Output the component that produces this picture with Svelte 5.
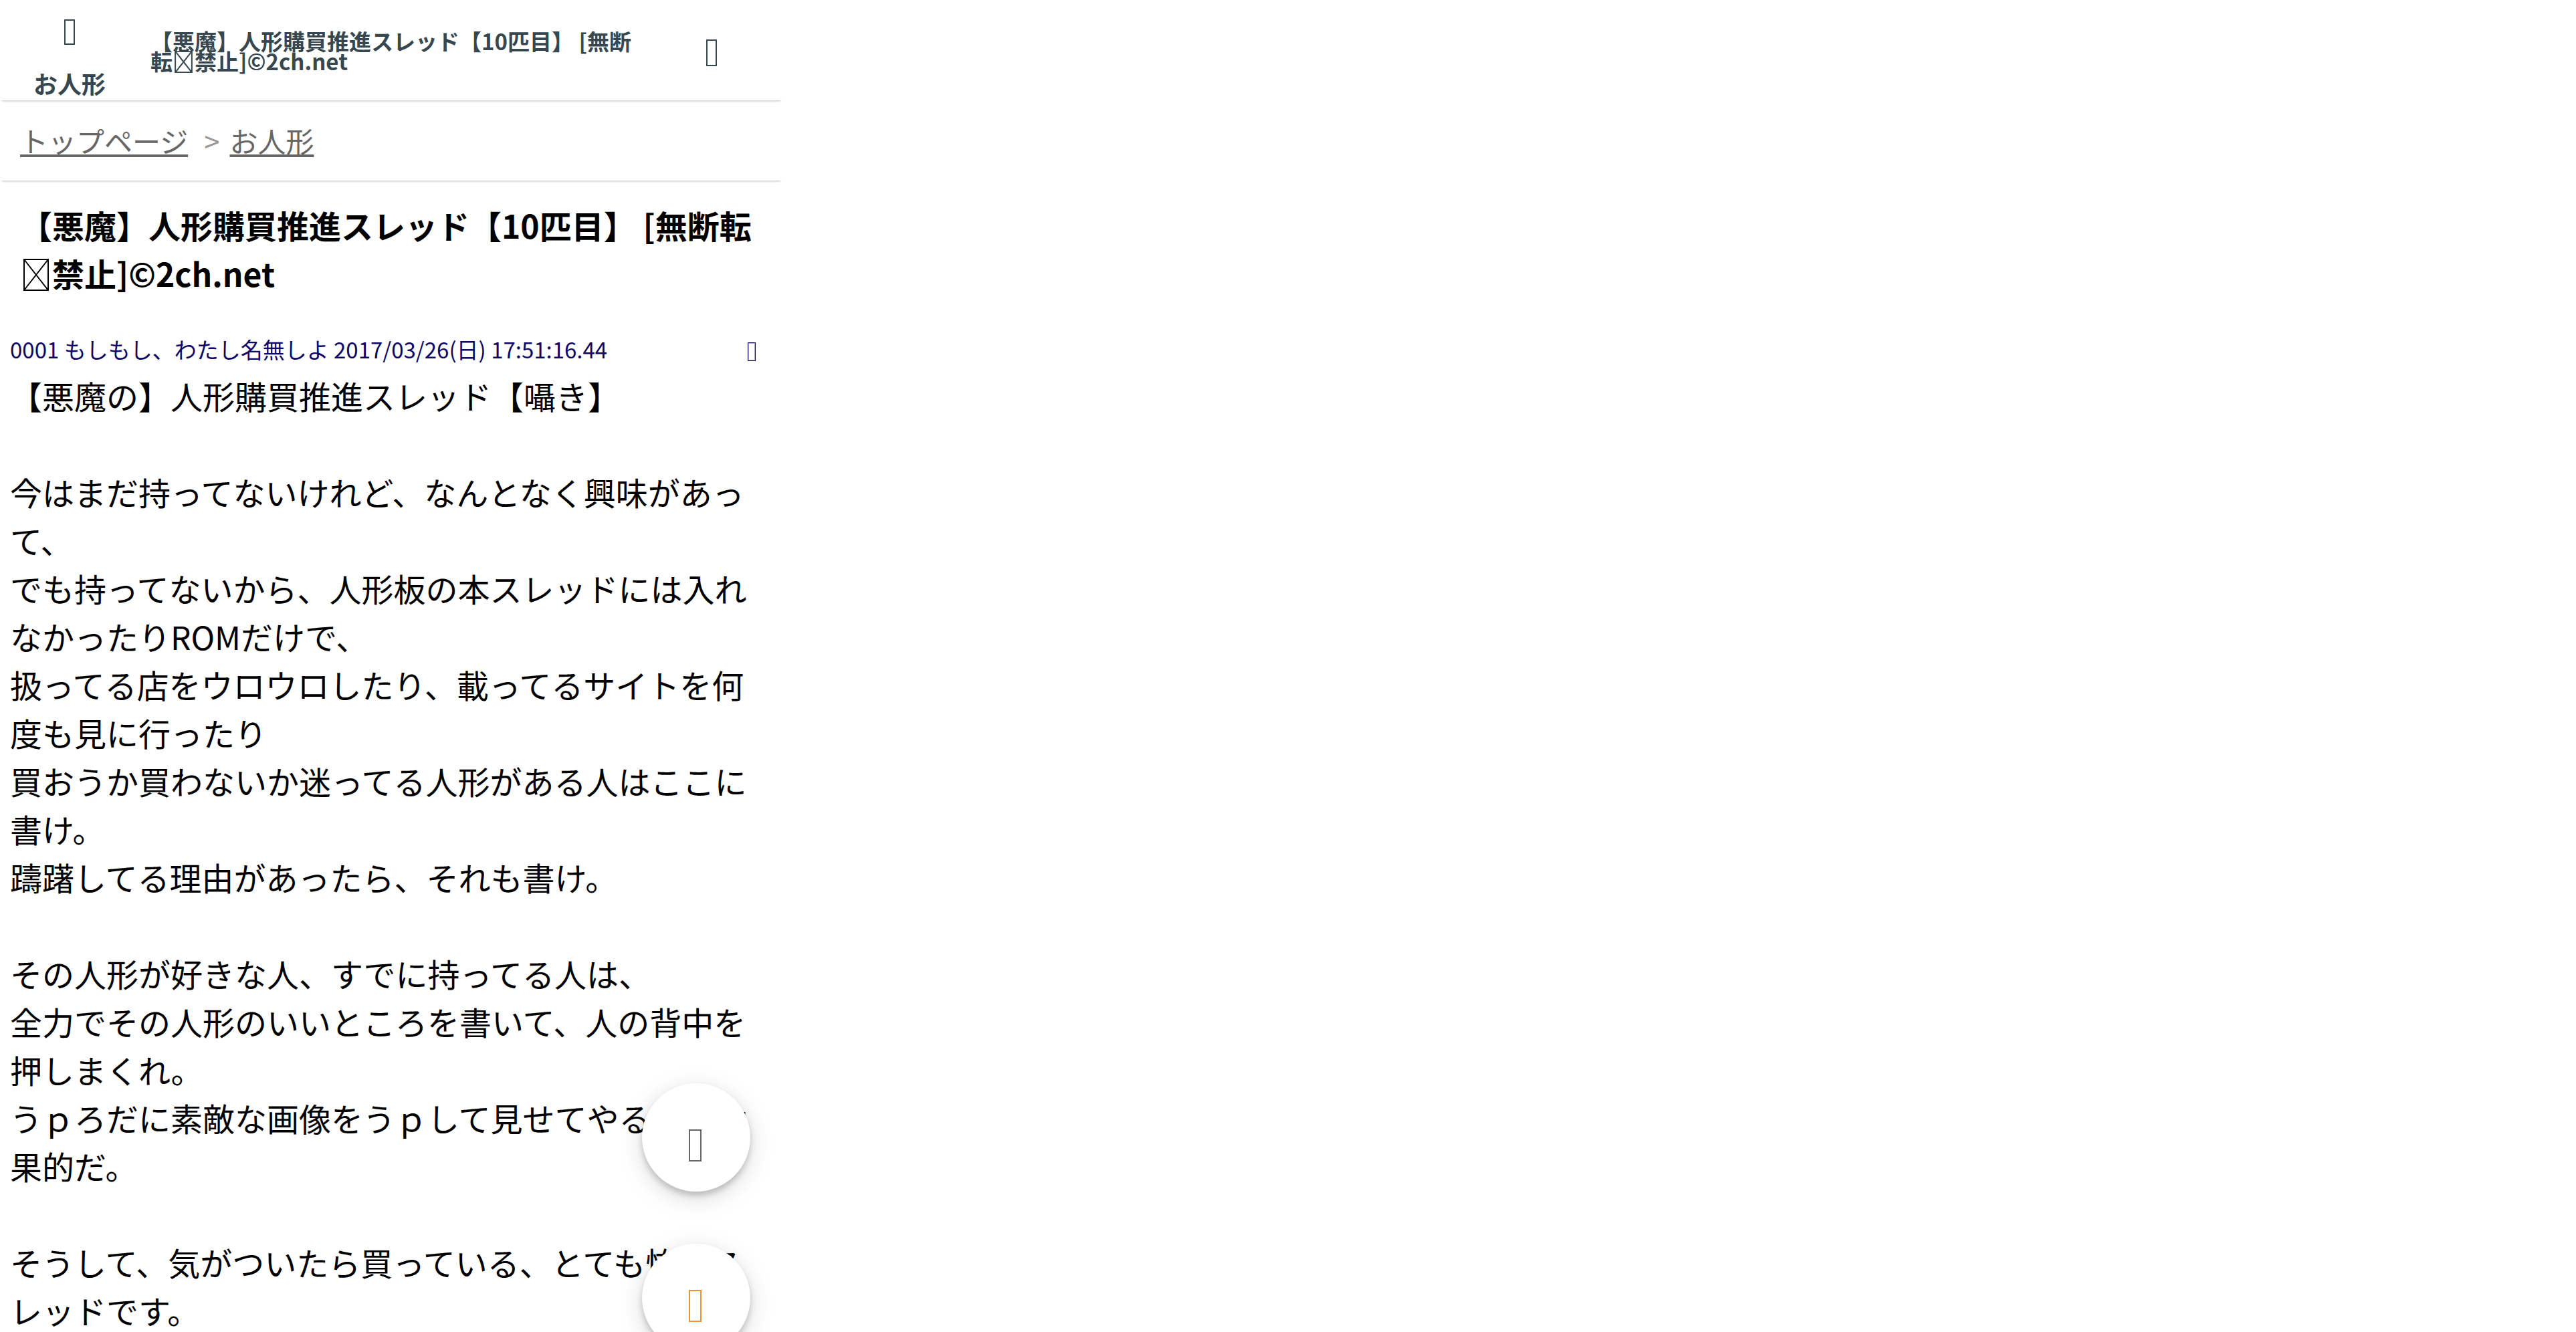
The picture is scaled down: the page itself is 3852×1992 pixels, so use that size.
<script>
  const boardName = 'お人形';

  const post = {
    number: '0001',
    name: 'もしもし、わたし名無しよ',
    date: '2017/03/26(日) 17:51:16.44',
    lines: [
      '【悪魔の】人形購買推進スレッド【囁き】',
      '',
      '今はまだ持ってないけれど、なんとなく興味があっ',
      'て、',
      'でも持ってないから、人形板の本スレッドには入れ',
      'なかったりROMだけで、',
      '扱ってる店をウロウロしたり、載ってるサイトを何',
      '度も見に行ったり',
      '買おうか買わないか迷ってる人形がある人はここに',
      '書け。',
      '躊躇してる理由があったら、それも書け。',
      '',
      'その人形が好きな人、すでに持ってる人は、',
      '全力でその人形のいいところを書いて、人の背中を',
      '押しまくれ。',
      'うｐろだに素敵な画像をうｐして見せてやるのも効',
      '果的だ。',
      '',
      'そうして、気がついたら買っている、とても怖いス',
      'レッドです。'
    ]
  };
</script>

{#snippet missingChar()}
  <svg class="missing" viewBox="0 0 48 48" aria-hidden="true">
    <path d="M6 1H42V47H6ZM6 1L42 47M42 1L6 47" />
  </svg>
{/snippet}

<div class="page">
  <header class="header">
    <a class="back" href="#board">
      <i class="glyph"></i>
      <span>{boardName}</span>
    </a>
    <div class="header-title">【悪魔】人形購買推進スレッド【10匹目】 [無断<br />転{@render missingChar()}禁止]©2ch.net</div>
    <button class="menu" aria-label="menu"><i class="glyph"></i></button>
  </header>

  <nav class="breadcrumb">
    <a href="#top">トップページ</a>
    <span>&gt;</span>
    <a href="#board">{boardName}</a>
  </nav>

  <h1>【悪魔】人形購買推進スレッド【10匹目】 [無断転<br />{@render missingChar()}禁止]©2ch.net</h1>

  <article class="post">
    <div class="meta">
      <span>{post.number} {post.name} {post.date}</span>
      <i class="glyph small"></i>
    </div>
    {#each post.lines as line}
      <p>{line}</p>
    {/each}
  </article>

  <div class="floating">
    <button class="fab" aria-label="reload"><i class="glyph large"></i></button>
    <button class="fab write" aria-label="write"><i class="glyph large"></i></button>
  </div>
</div>

<style>
  :global(body) {
    margin: 0;
    background: #fff;
    overflow: hidden;
  }

  .page {
    position: relative;
    width: 1170px;
    height: 1992px;
    overflow: hidden;
    color: #000;
    font-family: 'Noto Sans CJK JP', sans-serif;
  }

  button {
    display: flex;
    padding: 0;
    border: none;
    background: none;
  }

  .header,
  .breadcrumb {
    box-sizing: border-box;
    box-shadow: 0 4px 3px -3px rgba(0, 0, 0, 0.25);
  }

  .header {
    display: flex;
    height: 150px;
    color: #37474f;
    font-weight: 700;
  }

  .back {
    display: flex;
    flex-direction: column;
    align-items: center;
    width: 208px;
    padding-top: 29px;
    box-sizing: border-box;
    color: inherit;
    font-size: 36px;
    line-height: 52px;
    text-decoration: none;
  }

  .back span {
    margin-top: 31px;
  }

  .header-title {
    width: 740px;
    margin-left: 17px;
    padding-top: 46px;
    font-size: 33px;
    line-height: 30px;
    white-space: nowrap;
  }

  .menu {
    margin: 59px 0 0 91px;
    color: inherit;
  }

  .glyph {
    box-sizing: border-box;
    width: 16px;
    height: 40px;
    border: 2px solid currentColor;
  }

  .glyph.small {
    width: 12px;
    height: 28px;
    margin-top: 8px;
    border-width: 1px;
    box-shadow: inset 0 0 0 1px rgba(13, 6, 102, 0.35);
  }

  .glyph.large {
    width: 19px;
    height: 48px;
  }

  .missing {
    width: 1em;
    height: 1em;
    vertical-align: -0.12em;
    fill: none;
    stroke: currentColor;
    stroke-width: 2;
  }

  .missing path {
    vector-effect: non-scaling-stroke;
  }

  .header-title .missing {
    margin-top: -10px;
  }

  .breadcrumb {
    display: flex;
    height: 120px;
    padding-left: 30px;
    color: #999;
    font-size: 42px;
    line-height: 120px;
  }

  .breadcrumb span {
    margin: 0 15px 0 24px;
  }

  .breadcrumb a {
    color: #666;
  }

  h1 {
    margin: 30px 0 0 30px;
    font-size: 48px;
    font-weight: 700;
    line-height: 72px;
    white-space: nowrap;
  }

  .post {
    margin: 51px 0 0 15px;
  }

  .meta {
    display: flex;
    justify-content: space-between;
    align-items: center;
    height: 54px;
    margin-bottom: 6px;
    padding-right: 40px;
    color: #0d0666;
    font-size: 33px;
  }

  p {
    height: 72px;
    margin: 0;
    font-size: 48px;
    line-height: 72px;
    white-space: nowrap;
  }

  .floating {
    position: absolute;
    top: 1620px;
    left: 960px;
  }

  .fab {
    justify-content: center;
    width: 162px;
    height: 162px;
    margin-bottom: 78px;
    padding: 69px 3px 0 0;
    box-sizing: border-box;
    border-radius: 50%;
    background: #fff;
    color: #666;
    box-shadow: 0 6px 9px rgba(0, 0, 0, 0.18), 0 9px 36px rgba(0, 0, 0, 0.15);
  }

  .fab.write {
    color: #ec923a;
  }
</style>
